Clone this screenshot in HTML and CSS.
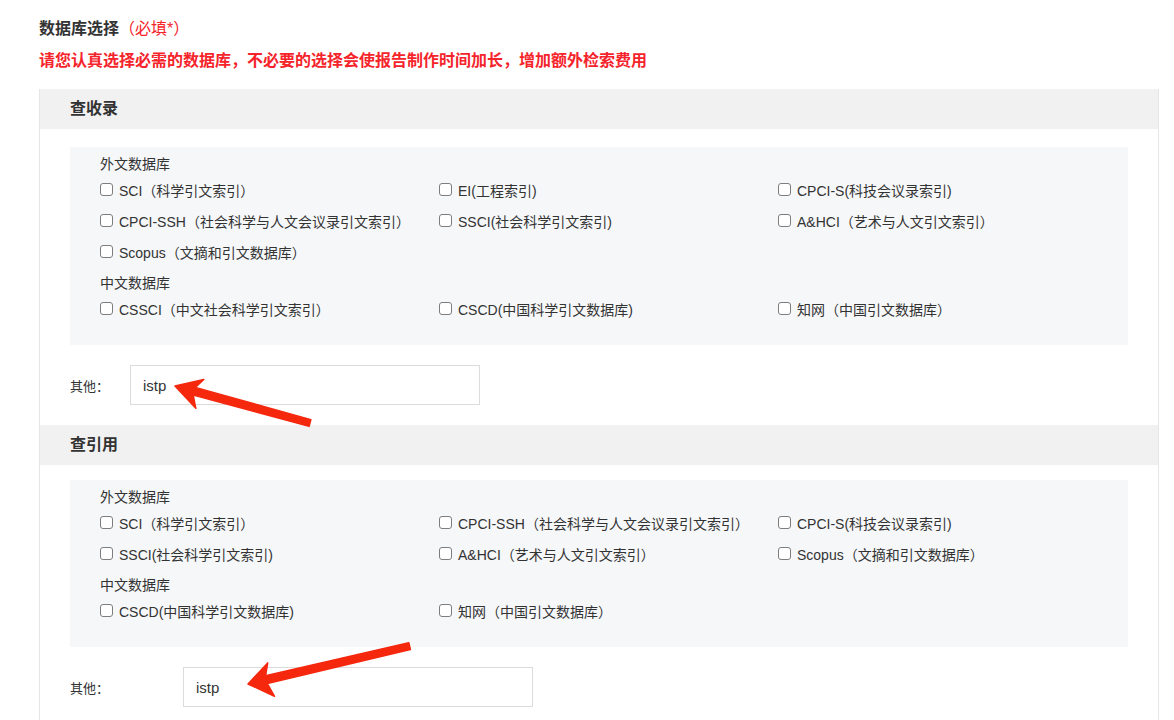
FILE: index.html
```html
<!DOCTYPE html>
<html lang="zh-CN">
<head>
    <meta charset="UTF-8">
    <meta name="viewport" content="width=device-width, initial-scale=1.0">
    <title>数据库选择</title>
    <link rel="stylesheet" href="styles.css">
</head>
<body>
    <div class="page">
    <p class="title">数据库选择<span class="req">（必填*）</span></p>
    <p class="warn">请您认真选择必需的数据库，不必要的选择会使报告制作时间加长，增加额外检索费用</p>

    <div class="panel">
        <div class="panel-head">查收录</div>
        <div class="panel-body">
            <div class="db-box">
                <p class="group">外文数据库</p>
                <div class="grid">
                    <label class="item"><input type="checkbox">SCI（科学引文索引）</label>
                    <label class="item"><input type="checkbox">EI(工程索引)</label>
                    <label class="item"><input type="checkbox">CPCI-S(科技会议录索引)</label>
                    <label class="item"><input type="checkbox">CPCI-SSH（社会科学与人文会议录引文索引）</label>
                    <label class="item"><input type="checkbox">SSCI(社会科学引文索引)</label>
                    <label class="item"><input type="checkbox">A&amp;HCI（艺术与人文引文索引）</label>
                    <label class="item"><input type="checkbox">Scopus（文摘和引文数据库）</label>
                </div>
                <p class="group group2">中文数据库</p>
                <div class="grid">
                    <label class="item"><input type="checkbox">CSSCI（中文社会科学引文索引）</label>
                    <label class="item"><input type="checkbox">CSCD(中国科学引文数据库)</label>
                    <label class="item"><input type="checkbox">知网（中国引文数据库）</label>
                </div>
            </div>
            <div class="other">
                <span class="other-label">其他：</span>
                <input class="other-input" type="text" value="istp">
            </div>
        </div>

        <div class="panel-head">查引用</div>
        <div class="panel-body second">
            <div class="db-box">
                <p class="group">外文数据库</p>
                <div class="grid">
                    <label class="item"><input type="checkbox">SCI（科学引文索引）</label>
                    <label class="item"><input type="checkbox">CPCI-SSH（社会科学与人文会议录引文索引）</label>
                    <label class="item"><input type="checkbox">CPCI-S(科技会议录索引)</label>
                    <label class="item"><input type="checkbox">SSCI(社会科学引文索引)</label>
                    <label class="item"><input type="checkbox">A&amp;HCI（艺术与人文引文索引）</label>
                    <label class="item"><input type="checkbox">Scopus（文摘和引文数据库）</label>
                </div>
                <p class="group group2">中文数据库</p>
                <div class="grid">
                    <label class="item"><input type="checkbox">CSCD(中国科学引文数据库)</label>
                    <label class="item"><input type="checkbox">知网（中国引文数据库）</label>
                </div>
            </div>
            <div class="other">
                <span class="other-label wide">其他：</span>
                <input class="other-input" type="text" value="istp">
            </div>
        </div>
    </div>
    </div>

    <!-- annotation arrows drawn over the screenshot -->
    <svg class="arrows" width="1174" height="720" viewBox="0 0 1174 720">
        <polygon points="175,386 203.8,379.4 195.3,387.4 310.9,419.6 309.1,426.4 193.2,395.1 195.8,408.3"/>
        <polygon points="248,684 267.7,662.9 265.6,675.8 408.8,642.7 410.4,649.5 267.4,683.6 274.5,696.3"/>
    </svg>
</body>
</html>
```

FILE: styles.css
```css
body{
    margin:0px;
    position:relative;
    font-family:"Liberation Sans", "Noto Sans CJK SC", sans-serif;
    color:#333;
    background-color:#fff;
}
.page{
    padding:18px 0 0 39px;
}
p{
    margin:0px;
}
.title{
    font-size:16px;
    font-weight:bold;
    line-height:22px;
}
.req{
    color:#f5242b;
    font-weight:normal;
}
.warn{
    margin-top:10px;
    font-size:16px;
    font-weight:bold;
    line-height:22px;
    color:#f5242b;
}
.panel{
    margin-top:17px;
    width:1118px;
    border-left:1px solid #e6e6e6;
    border-right:1px solid #e6e6e6;
}
.panel-head{
    height:40px;
    line-height:40px;
    padding-left:30px;
    background-color:#f1f1f1;
    font-size:16px;
    font-weight:bold;
}
.panel-body{
    padding:18px 30px 20px;
}
.panel-body.second{
    padding-top:15px;
}
.db-box{
    background-color:#f6f7f9;
    padding:7px 30px 21px;
}
.group{
    font-size:14px;
    line-height:20px;
}
.group2{
    margin-top:6px;
}
.grid{
    display:grid;
    grid-template-columns:repeat(3, 339px);
}
.item{
    display:flex;
    align-items:center;
    height:31px;
    font-size:14px;
    white-space:nowrap;
}
.item input{
    appearance:none;
    -webkit-appearance:none;
    width:13px;
    height:13px;
    margin:0 6px 0 0;
    border:1px solid #7d7d7d;
    border-radius:3px;
    background:#fff;
}
.other{
    display:flex;
    align-items:center;
    margin-top:20px;
}
.other-label{
    width:60px;
    font-size:13px;
}
.other-label.wide{
    width:113px;
}
.other-input{
    box-sizing:border-box;
    width:350px;
    height:40px;
    border:1px solid #dcdcdc;
    padding:0 12px;
    font-family:"Liberation Sans", "Noto Sans CJK SC", sans-serif;
    font-size:15px;
    color:#333;
    outline:none;
}
.arrows{
    position:absolute;
    top:0px;
    left:0px;
    pointer-events:none;
}
.arrows polygon{
    fill:#f5280e;
    stroke:#f5280e;
    stroke-width:1.5;
    stroke-linejoin:round;
}
```
